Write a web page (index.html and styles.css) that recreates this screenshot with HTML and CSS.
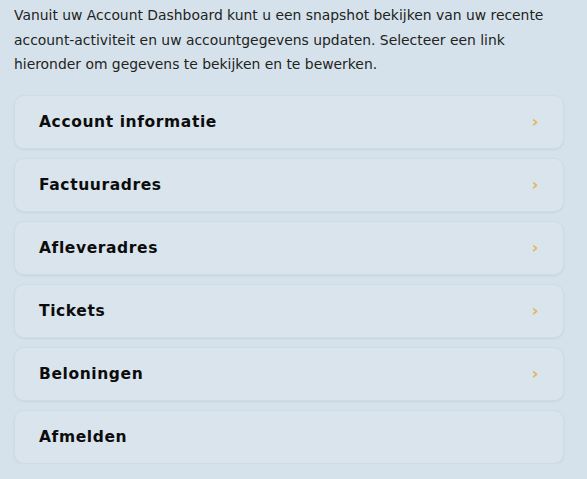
FILE: index.html
```html
<!DOCTYPE html>
<html lang="nl">
<head>
<meta charset="utf-8">
<link rel="stylesheet" href="styles.css">
</head>
<body>
<main class="dash">
  <p class="intro">Vanuit uw Account Dashboard kunt u een snapshot bekijken van uw recente account-activiteit en uw accountgegevens updaten. Selecteer een link hieronder om gegevens te bekijken en te bewerken.</p>
  <nav class="links">
    <a class="card" href="#"><span>Account informatie</span><span class="chev">›</span></a>
    <a class="card" href="#"><span>Factuuradres</span><span class="chev">›</span></a>
    <a class="card" href="#"><span>Afleveradres</span><span class="chev">›</span></a>
    <a class="card" href="#"><span>Tickets</span><span class="chev">›</span></a>
    <a class="card" href="#"><span>Beloningen</span><span class="chev">›</span></a>
    <a class="card" href="#"><span>Afmelden</span></a>
  </nav>
</main>
</body>
</html>
```
FILE: styles.css
```css
html, body {
  margin: 0;
  padding: 0;
  background: #d6e2eb;
}
body {
  font-family: "DejaVu Sans", sans-serif;
  color: #1a1a1a;
}
.dash {
  padding: 0 23px 0 14px;
}
.intro {
  margin: 0;
  padding-top: 3px;
  font-size: 13.9px;
  line-height: 24.5px;
  color: #222;
}
.links {
  margin-top: 18px;
  display: flex;
  flex-direction: column;
  gap: 9px;
}
.card {
  display: flex;
  align-items: center;
  justify-content: space-between;
  height: 52px;
  padding: 0 24px 0 24px;
  border: 1px solid #d0dce5;
  border-radius: 10px;
  background: #d9e4ec;
  box-shadow: 0 1px 2px rgba(120, 140, 160, 0.15);
  text-decoration: none;
  color: #0c0c0c;
  font-weight: bold;
  font-size: 15.5px;
  letter-spacing: 0.6px;
}
.chev {
  color: #e3b55a;
  font-size: 16px;
  font-weight: bold;
}
```
